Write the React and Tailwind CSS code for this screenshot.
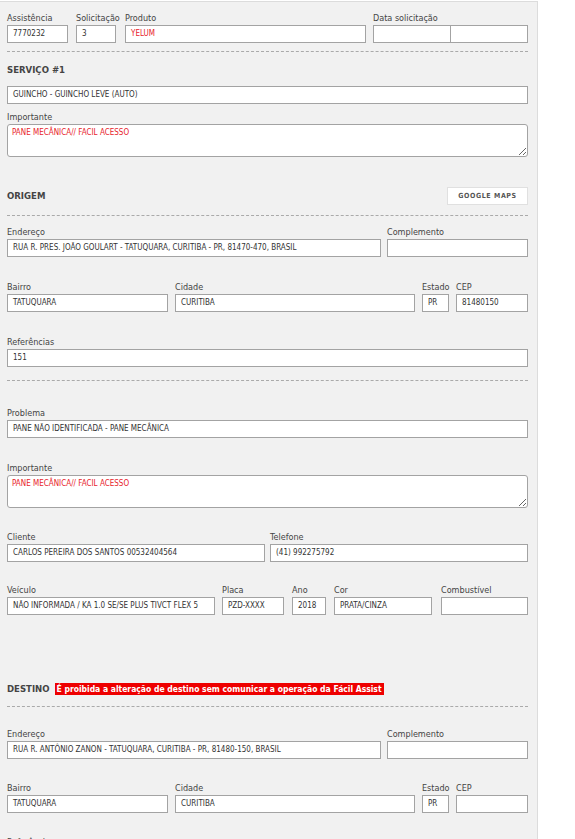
import React from "react";

const FONT = { fontFamily: '"DejaVu Sans Condensed", "Liberation Sans", sans-serif' };

function Label({ children }) {
  return <div className="h-[12px] text-[9px] leading-[11px] text-[#444] whitespace-nowrap">{children}</div>;
}

function Input({ value = "", red = false, className = "" }) {
  return (
    <div
      className={`h-[18px] bg-white border border-[#a3a3a3] flex items-center pl-[5px] text-[8px] whitespace-nowrap overflow-hidden ${red ? "text-[#e8232b]" : "text-[#333]"} ${className}`}
    >
      {value}
    </div>
  );
}

function Field({ label, value, red, w, className = "" }) {
  return (
    <div className={`flex flex-col shrink-0 ${className}`} style={w ? { width: w } : undefined}>
      <Label>{label}</Label>
      <Input value={value} red={red} />
    </div>
  );
}

function TextArea({ value }) {
  return (
    <textarea
      readOnly
      value={value}
      className="block w-full h-[33px] bg-white border border-[#a3a3a3] rounded-[3px] px-[4px] py-[3px] text-[8px] leading-[10px] text-[#e8232b] resize-y outline-none"
      style={FONT}
    />
  );
}

function Dashed({ className = "" }) {
  return <div className={`border-t border-dashed border-[#aaaaaa] ${className}`} />;
}

function Heading({ children }) {
  return <div className="text-[9.5px] font-bold text-[#444] leading-[12px]">{children}</div>;
}

export default function App() {
  return (
    <div className="w-[575px] h-[839px] overflow-hidden bg-white" style={FONT}>
      <div className="w-[538px] mt-[1px] bg-[#f1f1f1] border-t border-r border-[#dcdcdc] pl-[7px] pr-[9px] pt-[11px] pb-[40px]">
        {/* Row 1 */}
        <div className="flex">
          <Field label="Assistência" value="7770232" w={61} />
          <Field label="Solicitação" value="3" w={40} className="ml-[8px]" />
          <Field label="Produto" value="YELUM" red w={241} className="ml-[9px]" />
          <div className="flex flex-col ml-[7px]">
            <Label>Data solicitação</Label>
            <div className="flex">
              <Input className="w-[78px]" />
              <Input className="w-[77px] border-l-0" />
            </div>
          </div>
        </div>

        <Dashed className="mt-[8px]" />

        <div className="mt-[12px]">
          <Heading>SERVIÇO #1</Heading>
        </div>
        <Input value="GUINCHO - GUINCHO LEVE (AUTO)" className="mt-[10px]" />
        <div className="mt-[8px]">
          <Label>Importante</Label>
          <TextArea value="PANE MECÂNICA// FACIL ACESSO" />
        </div>

        {/* ORIGEM */}
        <div className="mt-[30px] flex items-center justify-between h-[18px]">
          <Heading>ORIGEM</Heading>
          <div className="w-[81px] h-[18px] bg-white border border-[#e0e0e0] flex items-center justify-center text-[7px] font-bold tracking-[0.6px] text-[#555]">
            GOOGLE MAPS
          </div>
        </div>
        <Dashed className="mt-[10px]" />

        <div className="flex mt-[11px]">
          <Field label="Endereço" value="RUA R. PRES. JOÃO GOULART - TATUQUARA, CURITIBA - PR, 81470-470, BRASIL" w={374} />
          <Field label="Complemento" value="" w={141} className="ml-[6px]" />
        </div>

        <div className="flex mt-[25px]">
          <Field label="Bairro" value="TATUQUARA" w={161} />
          <Field label="Cidade" value="CURITIBA" w={240} className="ml-[7px]" />
          <Field label="Estado" value="PR" w={27} className="ml-[7px]" />
          <Field label="CEP" value="81480150" w={72} className="ml-[7px]" />
        </div>

        <div className="mt-[25px]">
          <Field label="Referências" value="151" />
        </div>

        <Dashed className="mt-[13px]" />

        <div className="mt-[27px]">
          <Field label="Problema" value="PANE NÃO IDENTIFICADA - PANE MECÂNICA" />
        </div>

        <div className="mt-[25px]">
          <Label>Importante</Label>
          <TextArea value="PANE MECÂNICA// FACIL ACESSO" />
        </div>

        <div className="flex mt-[24px]">
          <Field label="Cliente" value="CARLOS PEREIRA DOS SANTOS 00532404564" w={258} />
          <Field label="Telefone" value="(41) 992275792" w={258} className="ml-[5px]" />
        </div>

        <div className="flex mt-[23px]">
          <Field label="Veículo" value="NÃO INFORMADA / KA 1.0 SE/SE PLUS TIVCT FLEX 5" w={208} />
          <Field label="Placa" value="PZD-XXXX" w={62} className="ml-[7px]" />
          <Field label="Ano" value="2018" w={34} className="ml-[8px]" />
          <Field label="Cor" value="PRATA/CINZA" w={98} className="ml-[8px]" />
          <Field label="Combustível" value="" w={87} className="ml-[9px]" />
        </div>

        {/* DESTINO */}
        <div className="mt-[68px] flex items-center h-[12px]">
          <Heading>DESTINO</Heading>
          <div className="ml-[5px] h-[12px] bg-[#ee0000] text-white text-[8.5px] font-bold leading-[12px] px-[2px] whitespace-nowrap">
            É proibida a alteração de destino sem comunicar a operação da Fácil Assist
          </div>
        </div>
        <Dashed className="mt-[11px]" />

        <div className="flex mt-[22px]">
          <Field label="Endereço" value="RUA R. ANTÔNIO ZANON - TATUQUARA, CURITIBA - PR, 81480-150, BRASIL" w={374} />
          <Field label="Complemento" value="" w={141} className="ml-[6px]" />
        </div>

        <div className="flex mt-[24px]">
          <Field label="Bairro" value="TATUQUARA" w={161} />
          <Field label="Cidade" value="CURITIBA" w={240} className="ml-[7px]" />
          <Field label="Estado" value="PR" w={27} className="ml-[7px]" />
          <Field label="CEP" value="" w={72} className="ml-[7px]" />
        </div>

        <div className="mt-[24px]">
          <Field label="Referências" value="" />
        </div>
      </div>
    </div>
  );
}
